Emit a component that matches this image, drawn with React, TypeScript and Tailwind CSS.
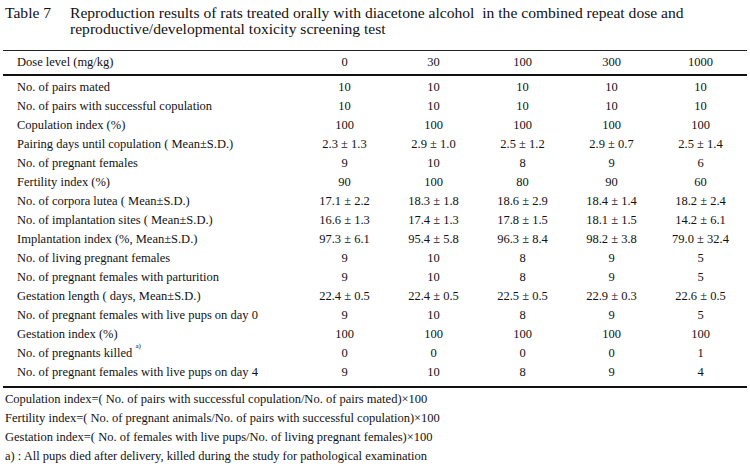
import React from "react";

const cols = ["0", "30", "100", "300", "1000"];

type Row = { label: React.ReactNode; values: string[] };

const rows: Row[] = [
  { label: "No. of pairs mated", values: ["10", "10", "10", "10", "10"] },
  { label: "No. of pairs with successful copulation", values: ["10", "10", "10", "10", "10"] },
  { label: "Copulation index (%)", values: ["100", "100", "100", "100", "100"] },
  { label: "Pairing days until copulation ( Mean±S.D.)", values: ["2.3 ± 1.3", "2.9 ± 1.0", "2.5 ± 1.2", "2.9 ± 0.7", "2.5 ± 1.4"] },
  { label: "No. of pregnant females", values: ["9", "10", "8", "9", "6"] },
  { label: "Fertility index (%)", values: ["90", "100", "80", "90", "60"] },
  { label: "No. of corpora lutea ( Mean±S.D.)", values: ["17.1 ± 2.2", "18.3 ± 1.8", "18.6 ± 2.9", "18.4 ± 1.4", "18.2 ± 2.4"] },
  { label: "No. of implantation sites ( Mean±S.D.)", values: ["16.6 ± 1.3", "17.4 ± 1.3", "17.8 ± 1.5", "18.1 ± 1.5", "14.2 ± 6.1"] },
  { label: "Implantation index (%, Mean±S.D.)", values: ["97.3 ± 6.1", "95.4 ± 5.8", "96.3 ± 8.4", "98.2 ± 3.8", "79.0 ± 32.4"] },
  { label: "No. of living pregnant females", values: ["9", "10", "8", "9", "5"] },
  { label: "No. of pregnant females with parturition", values: ["9", "10", "8", "9", "5"] },
  { label: "Gestation length ( days, Mean±S.D.)", values: ["22.4 ± 0.5", "22.4 ± 0.5", "22.5 ± 0.5", "22.9 ± 0.3", "22.6 ± 0.5"] },
  { label: "No. of pregnant females with live pups on day 0", values: ["9", "10", "8", "9", "5"] },
  { label: "Gestation index (%)", values: ["100", "100", "100", "100", "100"] },
  {
    label: (
      <>
        No. of pregnants killed <sup className="text-[7px] align-super">a)</sup>
      </>
    ),
    values: ["0", "0", "0", "0", "1"],
  },
  { label: "No. of pregnant females with live pups on day 4", values: ["9", "10", "8", "9", "4"] },
];

const notes = [
  "Copulation index=( No. of pairs with successful copulation/No. of pairs mated)×100",
  "Fertility index=( No. of pregnant animals/No. of pairs with successful copulation)×100",
  "Gestation index=( No. of females with live pups/No. of living pregnant females)×100",
  "a) : All pups died after delivery, killed during the study for pathological examination",
];

export default function App() {
  return (
    <div
      className="w-[750px] h-[466px] bg-white text-[#111] overflow-hidden"
      style={{ fontFamily: '"Liberation Serif", "DejaVu Serif", serif' }}
    >
      <div className="flex pt-[5px] pl-[5px] text-[15.6px] leading-[16px] h-[33px]">
        <div className="w-[65px] shrink-0">Table 7</div>
        <div>
          <div className="whitespace-nowrap">Reproduction results of rats treated orally with diacetone alcohol&nbsp; in the combined repeat dose and</div>
          <div className="whitespace-nowrap">reproductive/developmental toxicity screening test</div>
        </div>
      </div>

      <div className="ml-[3px] w-[744px] mt-[17px] text-[12.5px]">
        <div className="border-t border-[#222] border-b-2 border-b-[#111] flex h-[26px] items-center">
          <div className="w-[297px] pl-[14px]">Dose level (mg/kg)</div>
          {cols.map((c) => (
            <div key={c} className="w-[89px] text-center">
              {c}
            </div>
          ))}
        </div>
        <div className="pt-[2px] pb-[4px] border-b-2 border-[#111]">
          {rows.map((r, i) => (
            <div key={i} className="flex h-[19px] items-center">
              <div className="w-[297px] pl-[14px] whitespace-nowrap">{r.label}</div>
              {r.values.map((v, j) => (
                <div key={j} className="w-[89px] text-center whitespace-nowrap">
                  {v}
                </div>
              ))}
            </div>
          ))}
        </div>
      </div>

      <div className="pl-[5px] pt-[2px] text-[12.5px]">
        {notes.map((n, i) => (
          <div key={i} className="h-[19px] flex items-center whitespace-nowrap">
            {n}
          </div>
        ))}
      </div>
    </div>
  );
}
